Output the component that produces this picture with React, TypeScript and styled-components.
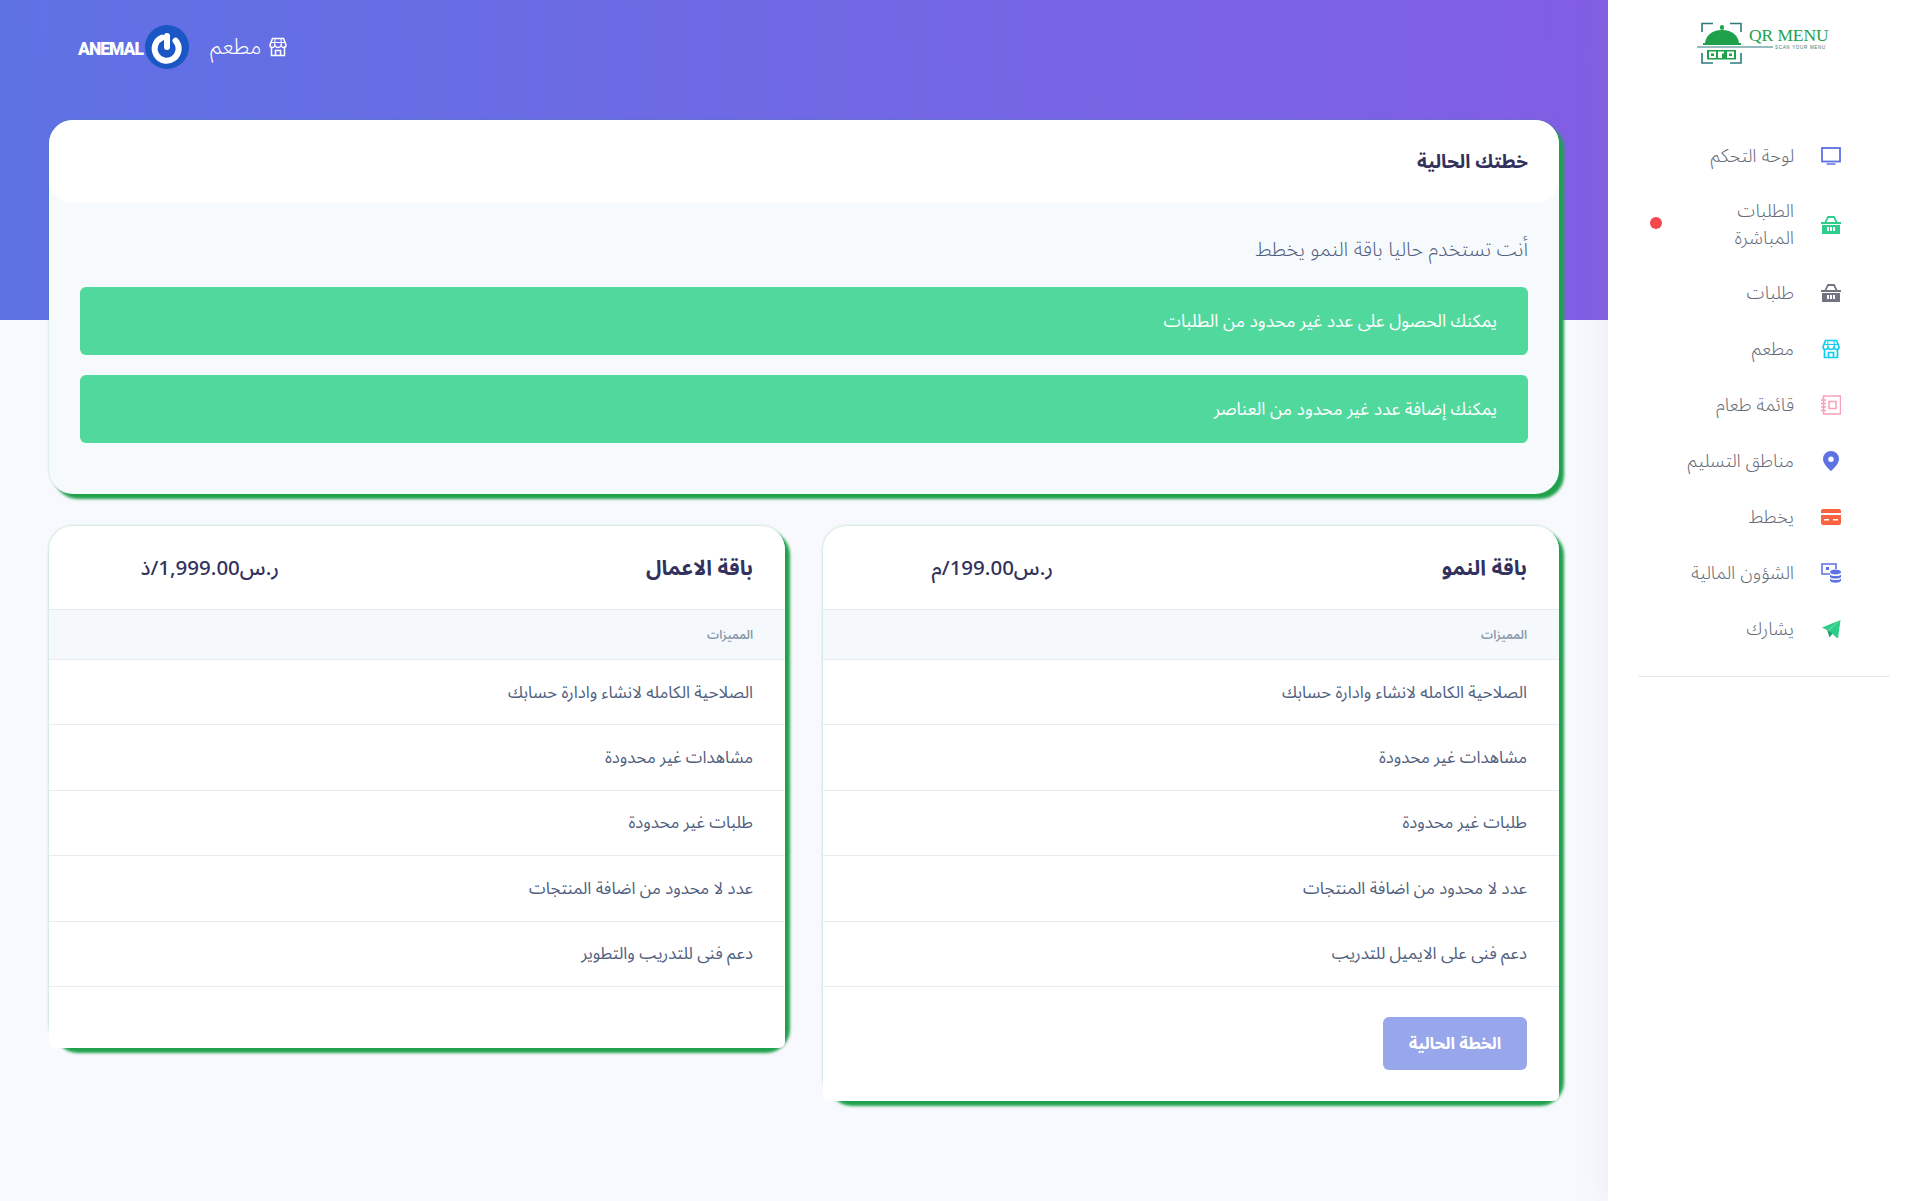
import React from 'react';
import styled, { createGlobalStyle } from 'styled-components';

const GlobalStyle = createGlobalStyle`
  html, body {
    margin: 0;
    padding: 0;
    background: #f8f9fe;
    font-family: "Noto Sans Arabic", "Noto Sans", "DejaVu Sans", sans-serif;
  }
  * { box-sizing: border-box; }
`;

const Shell = styled.div`
  display: flex;
  min-height: 1201px;
  direction: rtl;
  overflow: hidden;
`;

const Sidebar = styled.aside`
  width: 312px;
  flex: none;
  background: #fff;
  box-shadow: 0 0 32px rgba(136, 152, 170, 0.15);
  z-index: 2;
  padding: 22px 30px 0 30px;
`;

const LogoWrap = styled.div`
  display: flex;
  justify-content: center;
  height: 44px;
  direction: ltr;
`;

const NavList = styled.nav`
  display: flex;
  flex-direction: column;
  margin-top: 62px;
`;

const NavItem = styled.a<{ $tall?: boolean }>`
  display: flex;
  align-items: center;
  height: ${p => (p.$tall ? '81px' : '56px')};
  padding-right: 49px;
  color: #666b78;
  font-size: 18.5px;
  font-weight: 300;
  line-height: 27px;
`;

const NavIcon = styled.span`
  width: 20px;
  height: 20px;
  flex: none;
  display: flex;
  justify-content: center;
  margin-left: 27px;
  svg { display: block; }
`;

const NavLabel = styled.span`
  width: 112px;
`;

const LiveDot = styled.span`
  width: 12px;
  height: 12px;
  border-radius: 50%;
  background: #f5484d;
  margin: 0 20px 3px 0;
`;

const Divider = styled.hr`
  border: 0;
  border-top: 1px solid #e6e8ec;
  margin: 19px 0 0 0;
`;

const Main = styled.main`
  flex: 1;
  min-width: 0;
  position: relative;
`;

const Banner = styled.div`
  height: 320px;
  background: linear-gradient(87deg, #5e72e4 0%, #825ee4 100%);
`;

const TopBar = styled.div`
  display: flex;
  align-items: center;
  direction: ltr;
  height: 94px;
  padding-left: 78px;
  margin-bottom: -94px;
  position: relative;
`;

const BrandName = styled.span`
  font-family: "Roboto", "Liberation Sans", sans-serif;
  font-weight: 900;
  font-size: 17.5px;
  letter-spacing: -1px;
  color: #fff;
  width: 67px;
  padding-top: 3px;
`;

const RestaurantLink = styled.a`
  display: flex;
  align-items: center;
  gap: 8px;
  margin-left: 21px;
  color: #fff;
  font-size: 22.500px;
  font-weight: 300;
`;

const Content = styled.div`
  margin-top: -200px;
  padding: 0 49px 0 49px;
  position: relative;
  display: flex;
  flex-direction: column;
  gap: 32px;
`;

const CurrentCard = styled.section`
  border-radius: 24px;
  background: #f7fafc;
  box-shadow: 5px 5px 3px #1fa14c, 0 0 2px rgba(31, 161, 76, 0.4);
`;

const CurrentHeader = styled.header`
  height: 83px;
  background: #fff;
  border-radius: 24px;
  padding: 0 31px;
  display: flex;
  align-items: center;
`;

const CardTitle = styled.h3`
  margin: 0;
  font-size: 19px;
  font-weight: 700;
  color: #32325d;
`;

const CurrentBody = styled.div`
  padding: 32px 31px 51px;
`;

const Lead = styled.p`
  margin: 0 0 22px;
  height: 30px;
  line-height: 30px;
  font-size: 20.300px;
  font-weight: 300;
  color: #525f7f;
`;

const Notice = styled.div`
  height: 68px;
  display: flex;
  align-items: center;
  padding: 0 31px;
  background: #50d89d;
  border-radius: 6px;
  color: #fff;
  font-size: 17.500px;
  & + & { margin-top: 20px; }
`;

const PlanGrid = styled.div`
  display: grid;
  grid-template-columns: 736px 736px;
  justify-content: space-between;
  align-items: start;
`;

const PlanCard = styled.section`
  border-radius: 24px;
  box-shadow: 5px 5px 3px #1fa14c, 0 0 3px rgba(31, 161, 76, 0.4);
`;

const PlanInner = styled.div`
  background: #fff;
  border-radius: 24px 24px 6px 6px;
  overflow: hidden;
`;

const PlanHead = styled.header`
  height: 83px;
  display: grid;
  grid-template-columns: 1fr 230px;
  align-items: center;
  padding-right: 32px;
`;

const PlanName = styled.h3`
  margin: 0;
  font-size: 21px;
  font-weight: 700;
  color: #32325d;
`;

const Price = styled.span`
  font-size: 20.500px;
  font-weight: 500;
  color: #32325d;
  padding-top: 2px;
`;

const FeatureHead = styled.div`
  height: 51px;
  display: flex;
  align-items: center;
  padding: 2px 32px 0;
  background: #f6f9fc;
  border-top: 1px solid #e9ecef;
  border-bottom: 1px solid #e9ecef;
  font-size: 12px;
  font-weight: 600;
  color: #8898aa;
`;

const FeatureRow = styled.div`
  height: 65.4px;
  display: flex;
  align-items: center;
  padding: 0 32px;
  border-bottom: 1px solid #e9ecef;
  font-size: 16.800px;
  color: #525f7f;
`;

const PlanFooter = styled.footer`
  min-height: 60px;
  padding: 30px 32px 31px;
`;

const CurrentPlanButton = styled.button`
  display: block;
  width: 144px;
  height: 53px;
  border: 0;
  border-radius: 6px;
  background: #98a6ec;
  color: #fff;
  font-family: inherit;
  font-size: 16.500px;
  font-weight: 700;
`;

const Logo = () => (
  <svg width="134" height="44" viewBox="0 0 134 44" fill="none" aria-label="QR MENU">
    <path d="M5 10V1.500h11M33 1.500h11V10M5 31v10h11M33 41h11V31" stroke="#2c7a7b" strokeWidth="1.600" />
    <path d="M8 22c0-8 7-14 17-14s17 6 17 14z" fill="#1fa14c" />
    <rect x="23" y="3" width="4" height="5" rx="2" fill="#1fa14c" />
    <rect x="6" y="21" width="38" height="2" fill="#1fa14c" />
    <path d="M0 25h76" stroke="#2c7a7b" strokeWidth="1" />
    <rect x="10" y="28" width="29" height="9.500" fill="#1fa14c" />
    <path d="M12 29.500h7v6.500h-7zM21 29.500h6v2h-2v4.500h-4zM30 29.500h7v6.500h-7z" fill="#fff" />
    <path d="M14 31.500h3v2.500h-3zM32 31.500h3v2.500h-3z" fill="#1fa14c" />
    <text x="52" y="19" fontFamily="Liberation Serif, serif" fontSize="17.500" letterSpacing="-0.1" fill="#1fa14c">QR MENU</text>
    <text x="78" y="27" fontFamily="Liberation Sans, sans-serif" fontSize="4.500" letterSpacing="0.7" fill="#2c7a7b">SCAN YOUR MENU</text>
  </svg>
);

const PowerLogo = () => (
  <svg width="44" height="44" viewBox="0 0 44 44" fill="none">
    <circle cx="22" cy="22" r="22" fill="#1a56c4" />
    <path d="M15 14a12 12 0 1 0 14 0" stroke="#fff" strokeWidth="6" strokeLinecap="round" transform="rotate(12 22 22)" />
    <path d="M22 11v11" stroke="#fff" strokeWidth="6" strokeLinecap="round" />
  </svg>
);

const StoreIcon = ({ color, strokeWidth = 1.7 }: { color: string; strokeWidth?: number }) => (
  <svg width="18" height="20" viewBox="0 0 18 20" fill="none" stroke={color} strokeWidth={strokeWidth}>
    <path d="M3.500 1.500h11l2.500 6.500c0 1.500-1.200 2.500-2.500 2.500S12.400 9.600 12 8.500c-.400 1.100-1.500 2-3 2s-2.600-.900-3-2c-.400 1.100-1.200 2-2.500 2S1 9.500 1 8z" />
    <path d="M2 5.500h14" strokeWidth={1} />
    <path d="M6 2 5.500 8M12 2l.500 6" strokeWidth={1} />
    <path d="M2.500 10.500v8h13v-8M6.500 18.500v-5h5v5" />
  </svg>
);

const BasketIcon = ({ color }: { color: string }) => (
  <svg width="20" height="20" viewBox="0 0 20 20">
    <path d="M6.500 1h7l3.500 7h-2L12.500 3h-5L5 8H3z" fill={color} />
    <rect x="0" y="7" width="20" height="2" fill={color} />
    <path d="M1 10h18v9H1z" fill={color} />
    <path d="M6 12h2v4H6zM9 12h2v4H9zM12 12h2v4h-2z" fill="#fff" />
  </svg>
);

const MonitorIcon = () => (
  <svg width="20" height="20" viewBox="0 0 20 20" fill="none">
    <rect x="1" y="2" width="18" height="13.500" stroke="#5e72e4" strokeWidth="1.800" />
    <path d="M5.500 18h9" stroke="#5e72e4" strokeWidth="1.500" />
  </svg>
);

const MenuBookIcon = () => (
  <svg width="20" height="20" viewBox="0 0 20 20" fill="none" stroke="#f7a1b8" strokeWidth="1.500">
    <rect x="2.500" y="1" width="17" height="18" />
    <rect x="8" y="6.500" width="7" height="7" />
    <path d="M0 5h5M0 8.500h5M0 12h5M0 15.500h5" />
  </svg>
);

const PinIcon = () => (
  <svg width="20" height="20" viewBox="0 0 20 20">
    <path fillRule="evenodd" d="M10 0a8 8 0 0 1 8 8c0 4-4 8.500-8 12-4-3.500-8-8-8-12a8 8 0 0 1 8-8zm0 5.500a2.700 2.700 0 1 0 0 5.400 2.700 2.700 0 0 0 0-5.400z" fill="#5e72e4" />
  </svg>
);

const CardIcon = () => (
  <svg width="20" height="20" viewBox="0 0 20 20">
    <path d="M2 2h16a2 2 0 0 1 2 2v2H0V4a2 2 0 0 1 2-2zM0 8h20v8a2 2 0 0 1-2 2H2a2 2 0 0 1-2-2z" fill="#fb6340" />
    <path d="M3 12h5v1.500H3zM12 12h5v1.500h-5z" fill="#fff" />
  </svg>
);

const FinanceIcon = () => (
  <svg width="20" height="20" viewBox="0 0 20 20" fill="none">
    <path d="M9 11H1V1h14v5" stroke="#5e72e4" strokeWidth="1.600" />
    <path d="M5 4h3v3H5z" fill="#5e72e4" />
    <ellipse cx="14.500" cy="9" rx="5.500" ry="2.500" fill="#5e72e4" />
    <path d="M9 11.500c1 2 10 2 11 0V14c-1 2-10 2-11 0zM9 15.500c1 2 10 2 11 0V17.500c-1 3-10 3-11 0z" fill="#5e72e4" />
  </svg>
);

const SendIcon = () => (
  <svg width="20" height="20" viewBox="0 0 20 20">
    <path d="M19.500 1 1 8.500l6 3z" fill="#2dce89" />
    <path d="M19.500 1 7.500 11.500 16 19h1z" fill="#2dce89" />
    <path d="M6 10.500l2.500 8 3-4z" fill="#1a9e68" />
  </svg>
);

const navItems = [
  { label: 'لوحة التحكم', icon: <MonitorIcon /> },
  { label: 'الطلبات المباشرة', icon: <BasketIcon color="#2dce89" />, live: true },
  { label: 'طلبات', icon: <BasketIcon color="#6f7480" /> },
  { label: 'مطعم', icon: <StoreIcon color="#11cdef" /> },
  { label: 'قائمة طعام', icon: <MenuBookIcon /> },
  { label: 'مناطق التسليم', icon: <PinIcon /> },
  { label: 'يخطط', icon: <CardIcon /> },
  { label: 'الشؤون المالية', icon: <FinanceIcon /> },
  { label: 'يشارك', icon: <SendIcon /> },
];

const plans = [
  {
    name: 'باقة النمو',
    price: 'ر.س199.00/م',
    features: [
      'الصلاحية الكامله لانشاء وادارة حسابك',
      'مشاهدات غير محدودة',
      'طلبات غير محدودة',
      'عدد لا محدود من اضافة المنتجات',
      'دعم فنى على الايميل للتدريب',
    ],
    current: true,
  },
  {
    name: 'باقة الاعمال',
    price: 'ر.س1,999.00/ذ',
    features: [
      'الصلاحية الكامله لانشاء وادارة حسابك',
      'مشاهدات غير محدودة',
      'طلبات غير محدودة',
      'عدد لا محدود من اضافة المنتجات',
      'دعم فنى للتدريب والتطوير',
    ],
    current: false,
  },
];

export default function App() {
  return (
    <>
      <GlobalStyle />
      <Shell>
        <Sidebar>
          <LogoWrap>
            <Logo />
          </LogoWrap>
          <NavList>
            {navItems.map(item => (
              <NavItem key={item.label} $tall={item.live}>
                <NavIcon>{item.icon}</NavIcon>
                <NavLabel>{item.label}</NavLabel>
                {item.live && <LiveDot />}
              </NavItem>
            ))}
          </NavList>
          <Divider />
        </Sidebar>
        <Main>
          <TopBar>
            <BrandName>ANEMAL</BrandName>
            <PowerLogo />
            <RestaurantLink>
              <span>مطعم</span>
              <StoreIcon color="#fff" strokeWidth={1.5} />
            </RestaurantLink>
          </TopBar>
          <Banner />
          <Content>
            <CurrentCard>
              <CurrentHeader>
                <CardTitle>خطتك الحالية</CardTitle>
              </CurrentHeader>
              <CurrentBody>
                <Lead>أنت تستخدم حاليا باقة النمو يخطط</Lead>
                <Notice>يمكنك الحصول على عدد غير محدود من الطلبات</Notice>
                <Notice>يمكنك إضافة عدد غير محدود من العناصر</Notice>
              </CurrentBody>
            </CurrentCard>
            <PlanGrid>
              {plans.map(plan => (
                <PlanCard key={plan.name}>
                  <PlanInner>
                    <PlanHead>
                      <PlanName>{plan.name}</PlanName>
                      <Price>{plan.price}</Price>
                    </PlanHead>
                    <FeatureHead>المميزات</FeatureHead>
                    {plan.features.map(f => (
                      <FeatureRow key={f}>{f}</FeatureRow>
                    ))}
                    <PlanFooter>
                      {plan.current && <CurrentPlanButton>الخطة الحالية</CurrentPlanButton>}
                    </PlanFooter>
                  </PlanInner>
                </PlanCard>
              ))}
            </PlanGrid>
          </Content>
        </Main>
      </Shell>
    </>
  );
}
